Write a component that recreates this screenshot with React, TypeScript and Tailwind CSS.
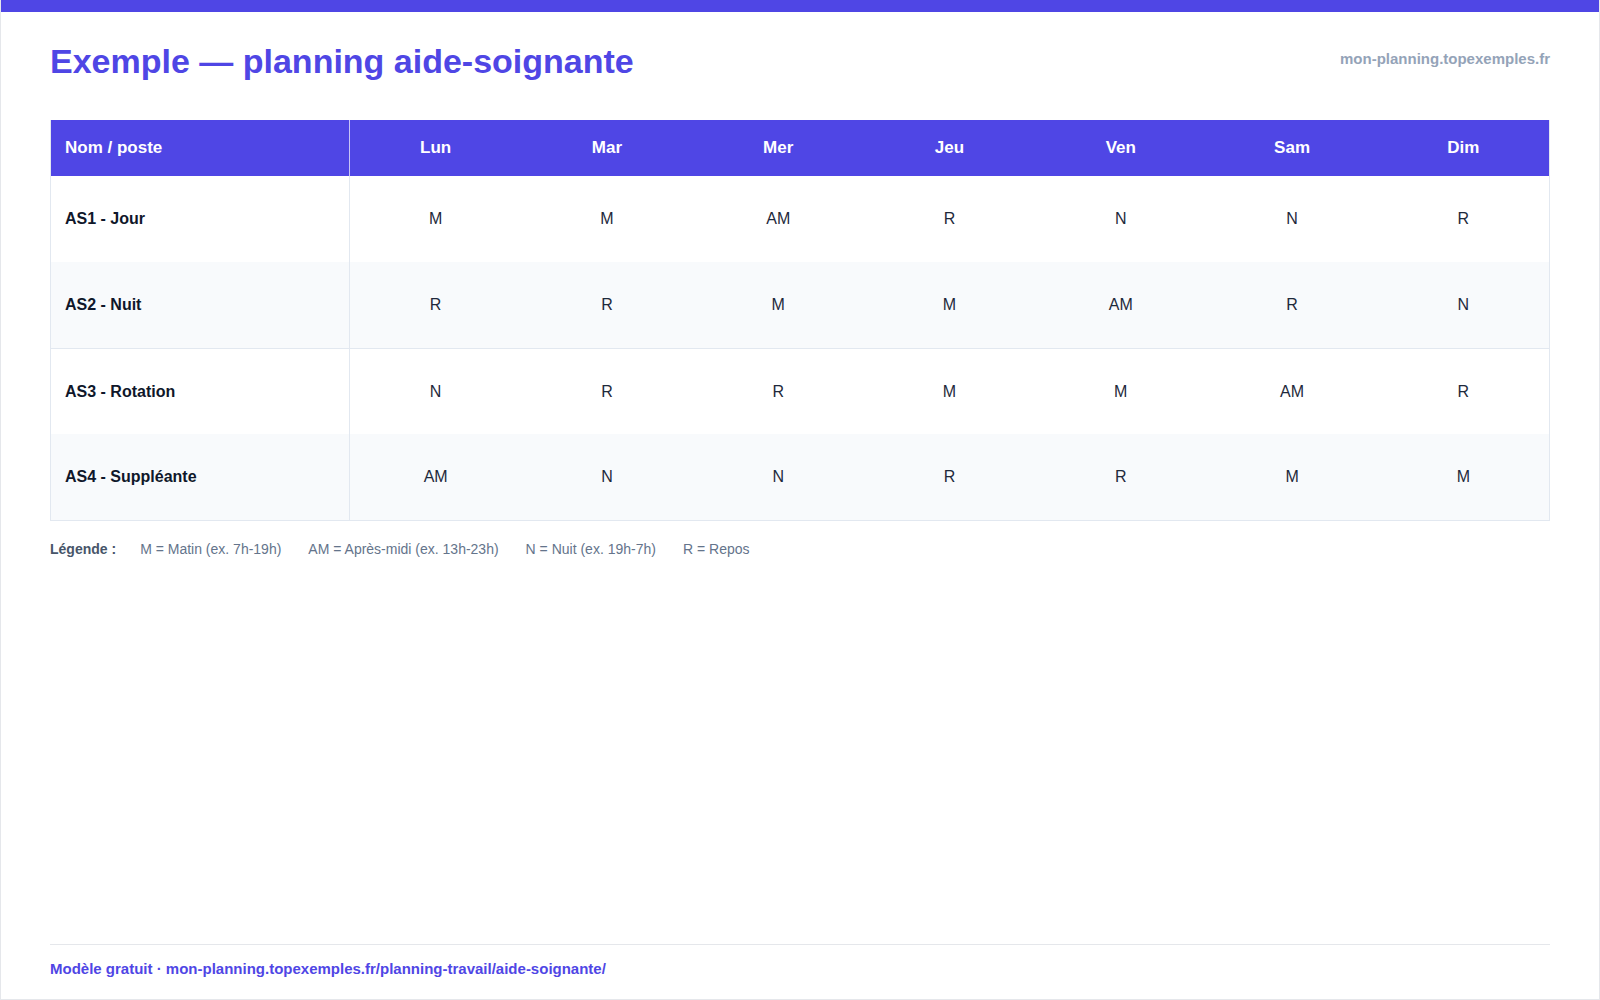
const days = ['Lun', 'Mar', 'Mer', 'Jeu', 'Ven', 'Sam', 'Dim']

const rows = [
  { name: 'AS1 - Jour', shifts: ['M', 'M', 'AM', 'R', 'N', 'N', 'R'] },
  { name: 'AS2 - Nuit', shifts: ['R', 'R', 'M', 'M', 'AM', 'R', 'N'] },
  { name: 'AS3 - Rotation', shifts: ['N', 'R', 'R', 'M', 'M', 'AM', 'R'] },
  { name: 'AS4 - Suppléante', shifts: ['AM', 'N', 'N', 'R', 'R', 'M', 'M'] },
]

const legend = [
  'M = Matin (ex. 7h-19h)',
  'AM = Après-midi (ex. 13h-23h)',
  'N = Nuit (ex. 19h-7h)',
  'R = Repos',
]

export default function App() {
  return (
    <div className="flex h-[1000px] w-full flex-col border-x border-b border-[#e5e7eb] bg-white font-['Liberation_Sans',Arial,sans-serif]">
      <div className="h-3 bg-[#4f46e5]" />

      <main className="flex flex-1 flex-col px-[49px]">
        <header className="flex items-center justify-between pt-[29px]">
          <h1 className="text-[34px] font-bold leading-[40px] text-[#4f46e5]">
            Exemple — planning aide-soignante
          </h1>
          <span className="-mt-1 text-[15px] font-bold text-[#94a3b8]">mon-planning.topexemples.fr</span>
        </header>

        <div className="mt-[39px] border border-t-0 border-[#e2e8f0]">
          <div className="grid h-[56px] grid-cols-[299px_repeat(7,1fr)] bg-[#4f46e5] text-[17px] font-bold text-white">
            <div className="flex items-center border-r border-[#c7c4f7] pl-[14px]">Nom / poste</div>
            {days.map((d) => (
              <div key={d} className="flex items-center justify-center">
                {d}
              </div>
            ))}
          </div>

          {rows.map((row, i) => (
            <div
              key={row.name}
              className={`grid h-[86px] grid-cols-[299px_repeat(7,1fr)] text-[16px] text-[#1e293b] ${
                i % 2 === 1 ? 'bg-[#f8fafc]' : 'bg-white'
              } ${i === 2 ? 'border-t border-[#e2e8f0]' : ''}`}
            >
              <div className="flex items-center border-r border-[#e2e8f0] pl-[14px] font-bold text-[#0f172a]">
                {row.name}
              </div>
              {row.shifts.map((s, j) => (
                <div key={j} className="flex items-center justify-center">
                  {s}
                </div>
              ))}
            </div>
          ))}
        </div>

        <div className="mt-[18px] flex items-center gap-x-[27px] text-[14px] leading-5 text-[#64748b]">
          <span className="-mr-[3px] font-bold text-[#475569]">Légende :</span>
          {legend.map((l) => (
            <span key={l}>{l}</span>
          ))}
        </div>

        <footer className="mt-auto mb-[21px] border-t border-[#e5e7eb] pt-[15px]">
          <p className="text-[15px] font-bold leading-[18px] text-[#4f46e5]">
            Modèle gratuit · mon-planning.topexemples.fr/planning-travail/aide-soignante/
          </p>
        </footer>
      </main>
    </div>
  )
}
